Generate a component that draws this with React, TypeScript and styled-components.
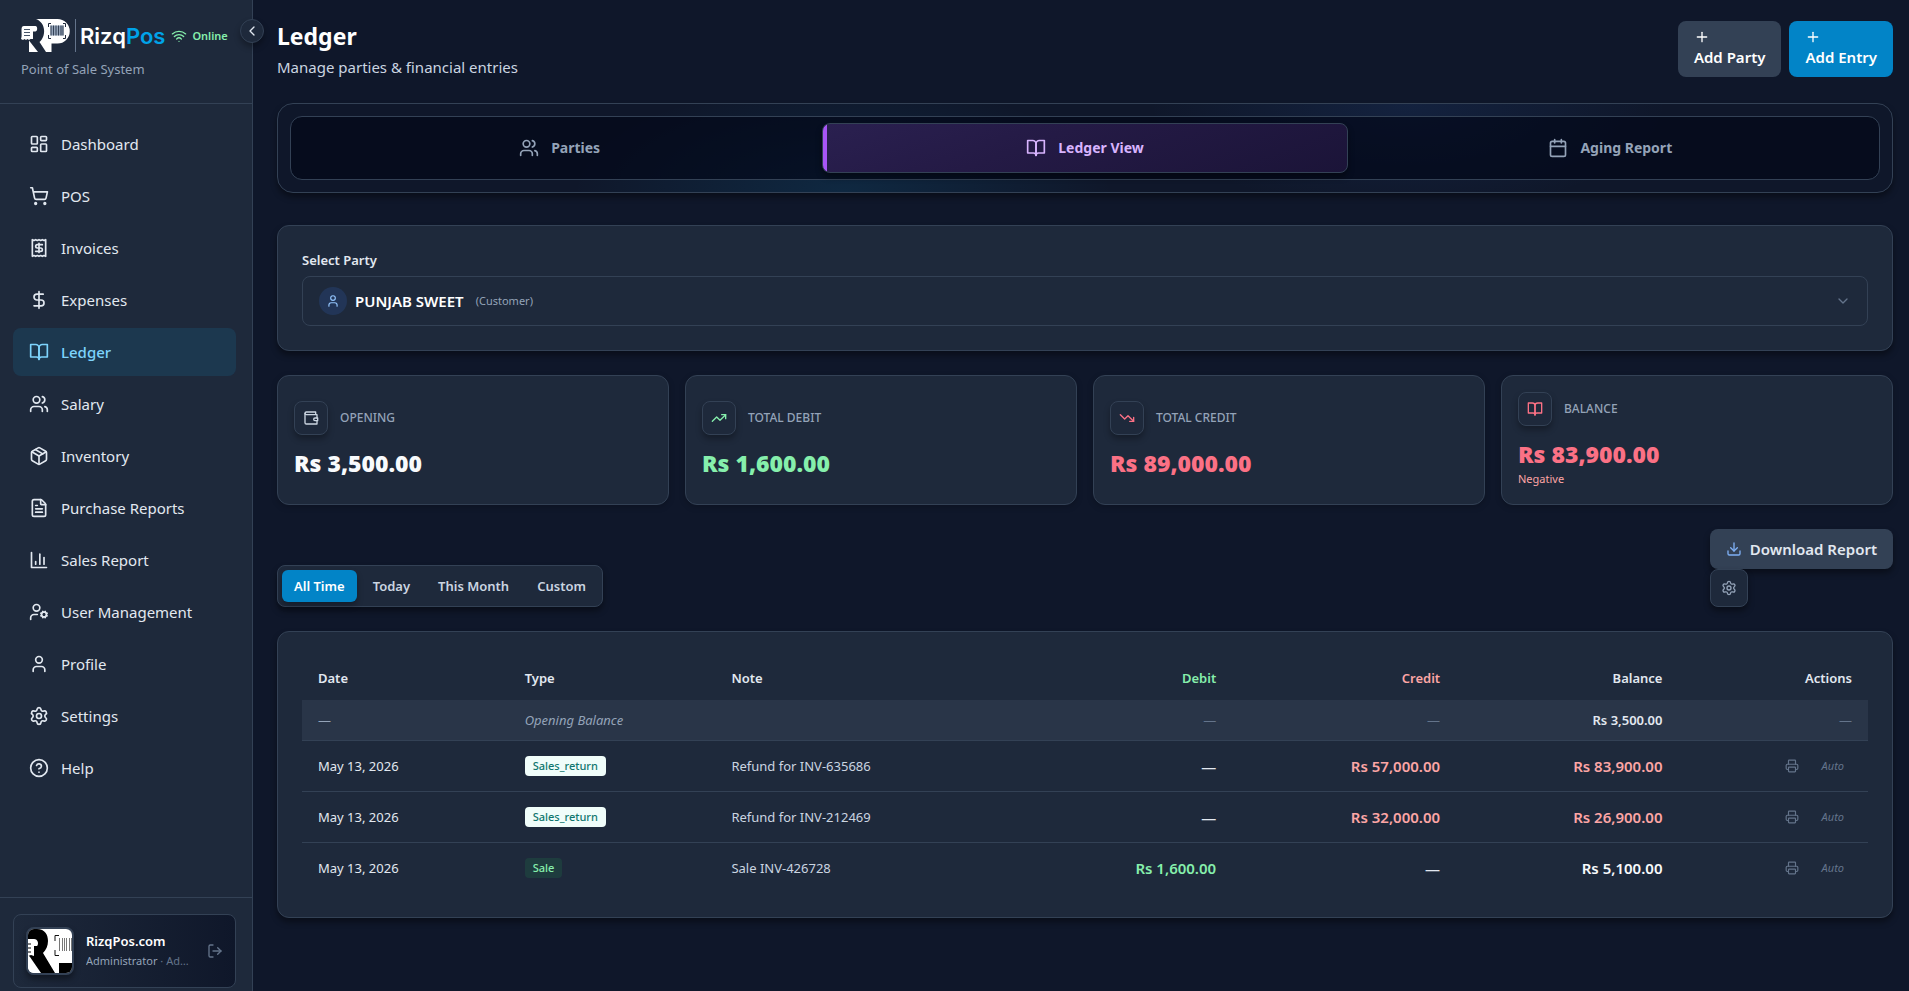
import React from 'react';
import styled, { createGlobalStyle, css } from 'styled-components';
import {
  LayoutDashboard, ShoppingCart, Receipt, DollarSign, Users, Package, FileText, UserCog, User,
  Settings, CircleHelp, Wifi, ChevronLeft, ChevronDown, Plus, Calendar, TrendingUp, TrendingDown,
  Download, Printer, LogOut,
} from 'lucide-react';

const c = {
  page: '#0f172a',
  panel: '#1e293b',
  line: '#334155',
  text: '#e2e8f0',
  soft: '#cbd5e1',
  muted: '#94a3b8',
  faint: '#64748b',
  sky: '#0284c7',
  green: '#86efac',
  red: '#fca5a5',
  rose: '#fb7185',
};

const GlobalStyle = createGlobalStyle`
  *, *::before, *::after { box-sizing: border-box; }
  body {
    margin: 0;
    background: ${c.page};
    color: ${c.text};
    font-family: 'Noto Sans', 'Open Sans', sans-serif;
    font-size: 15px;
    line-height: 24px;
  }
  button, select { font: inherit; color: inherit; cursor: pointer; }
  h1, p { margin: 0; }
`;

/* ---------- icons that the package draws in another form ---------- */

type IconProps = { size?: number; strokeWidth?: number };

const Outline = ({ size = 20, strokeWidth = 2, children }: IconProps & { children: React.ReactNode }) => (
  <svg width={size} height={size} viewBox="0 0 24 24" fill="none" stroke="currentColor"
    strokeWidth={strokeWidth} strokeLinecap="round" strokeLinejoin="round" aria-hidden="true">
    {children}
  </svg>
);

const BookIcon = (p: IconProps) => (
  <Outline {...p}>
    <path d="M2 3h6a4 4 0 0 1 4 4v14a3 3 0 0 0-3-3H2z" />
    <path d="M22 3h-6a4 4 0 0 0-4 4v14a3 3 0 0 1 3-3h7z" />
  </Outline>
);

const BarsIcon = (p: IconProps) => (
  <Outline {...p}>
    <path d="M3 3v18h18" />
    <path d="M18 17V9" />
    <path d="M13 17V5" />
    <path d="M8 17v-3" />
  </Outline>
);

const WalletIcon = (p: IconProps) => (
  <Outline {...p}>
    <path d="M21 12V7H5a2 2 0 0 1 0-4h14v4" />
    <path d="M3 5v14a2 2 0 0 0 2 2h16v-5" />
    <path d="M18 12a2 2 0 0 0 0 4h4v-4Z" />
  </Outline>
);

const LogoMark = () => (
  <svg width="49" height="33" viewBox="0 0 49 33" aria-hidden="true">
    <path fill="#fff" d="M15 0h21.500a12 12 0 0 1 0 24.500H30.500V33H25L18.500 23C25 18 25.500 4 15 0Z" />
    <path fill="#fff" d="M8 21.500 17 33H8Z" />
    <path fill="#fff" d="M3 7h11.500c2 0 2.500 5 0 5.500H12V20H9.500l-1.500 1-1.500-1-1.500 1-1.500-1L2 21 0 20c1-3 .5-5 .5-9C.5 8.500 1 7 3 7Z" />
    <path stroke="#475569" strokeWidth="1" d="M3 10.500h6M3 13.500h6M3 16.500h6" />
    <path fill="none" stroke="#1e293b" strokeWidth="1" d="M30 4.500h-2.500V8M42 4.500h2.500V8M30 19.500h-2.500V16M42 19.500h2.500V16" />
    <rect x="29.500" y="6.500" width="13" height="10" fill="#94a3b8" />
    <path stroke="#334155" strokeWidth="1" d="M30 6.500v10M32.500 6.500v10M35 6.500v10M37.500 6.500v10M40 6.500v10M42 6.500v10" />
  </svg>
);

const AvatarArt = () => (
  <svg width="44" height="44" viewBox="0 0 44 44" aria-hidden="true">
    <rect width="44" height="44" fill="#fff" />
    <path d="M0 0h9c8 0 11 6 11 12 0 5-2 9-5 12l12 20H13L2 28 0 26Z" />
    <path fill="#fff" d="M0 10h6c4 0 5 5 3 7H6v10l-3-1-3 1Z" />
    <path stroke="#000" strokeWidth="1" d="M0 15h3M0 19h3M0 23h3" />
    <path fill="#fff" d="M0 28 12 44H0Z" />
    <path d="M31 34h13v10H31Z" />
    <path fill="none" stroke="#111" strokeWidth="1" d="M31 6.500h-4V12M31 26.500h-4V21" />
    <path stroke="#777" strokeWidth="1" d="M31.500 9v13M34.500 9v13M36.500 9v13M38.500 9v13M41.500 9v13M43.500 9v13" />
  </svg>
);

/* ---------- sidebar ---------- */

const Shell = styled.div`
  display: flex;
  min-height: 100vh;
`;

const Sidebar = styled.aside`
  position: sticky;
  top: 0;
  flex: none;
  width: 253px;
  height: 100vh;
  display: flex;
  flex-direction: column;
  background: ${c.panel};
  border-right: 1px solid ${c.line};
`;

const Brand = styled.div`
  padding: 19px 16px 24px 21px;
  border-bottom: 1px solid ${c.line};
`;

const BrandRow = styled.div`
  display: flex;
  align-items: center;
  height: 33px;
`;

const Wordmark = styled.span`
  display: flex;
  align-items: center;
  height: 33px;
  margin: 0 6px 0 5px;
  padding-left: 4px;
  border-left: 1px solid ${c.faint};
  font: 600 22px/28px Inter, sans-serif;
  color: #fff;
  em { font-style: normal; color: #00a3e8; }
`;

const Online = styled.span`
  display: flex;
  align-items: center;
  gap: 5px;
  font-size: 11px;
  font-weight: 600;
  line-height: 16px;
  color: ${c.green};
`;

const Tagline = styled.p`
  margin-top: 7px;
  font-size: 13px;
  line-height: 20px;
  color: ${c.muted};
`;

const Collapse = styled.button`
  position: absolute;
  top: 19px;
  right: -12px;
  z-index: 1;
  display: grid;
  place-items: center;
  width: 24px;
  height: 24px;
  padding: 0;
  border: 1px solid ${c.line};
  border-radius: 50%;
  background: ${c.panel};
  box-shadow: 0 4px 6px rgba(0, 0, 0, 0.3);
`;

const Nav = styled.nav`
  flex: 1;
  min-height: 0;
  overflow: hidden;
  display: flex;
  flex-direction: column;
  gap: 4px;
  padding: 16px 16px 16px 13px;
`;

const NavLink = styled.a<{ $active?: boolean }>`
  display: flex;
  align-items: center;
  gap: 12px;
  flex: 0 0 48px;
  padding: 0 16px;
  border-radius: 8px;
  color: ${c.text};
  text-decoration: none;
  ${(p) => p.$active && css`
    background: rgba(14, 165, 233, 0.12);
    color: #7dd3fc;
    font-weight: 500;
  `}
`;

const Foot = styled.div`
  padding: 16px 16px 3px 13px;
  border-top: 1px solid ${c.line};
`;

const Profile = styled.div`
  display: flex;
  align-items: center;
  gap: 12px;
  padding: 12px;
  border: 1px solid ${c.line};
  border-radius: 8px;
  background: linear-gradient(90deg, ${c.panel}, ${c.page});
`;

const Avatar = styled.span`
  flex: none;
  display: block;
  width: 48px;
  height: 48px;
  overflow: hidden;
  border: 2px solid ${c.line};
  border-radius: 8px;
  box-shadow: 0 4px 6px rgba(0, 0, 0, 0.4);
  svg { display: block; }
`;

const ProfileText = styled.div`
  flex: 1;
  min-width: 0;
  p { overflow: hidden; white-space: nowrap; text-overflow: ellipsis; }
`;

const ProfileName = styled.p`
  font-size: 13px;
  font-weight: 600;
  line-height: 20px;
  color: #fff;
`;

const ProfileRole = styled.p`
  font-size: 11px;
  line-height: 20px;
  color: ${c.faint};
  span { color: ${c.muted}; }
`;

const BareButton = styled.button`
  display: inline-grid;
  place-items: center;
  padding: 0;
  border: 0;
  background: none;
  color: ${c.faint};
`;

const LogoutButton = styled(BareButton)`
  width: 16px;
  height: 28px;
`;

/* ---------- main area ---------- */

const Main = styled.main`
  flex: 1;
  min-width: 0;
  padding: 21px 16px 24px 24px;
`;

const PageHead = styled.header`
  display: flex;
  justify-content: space-between;
  margin-bottom: 24px;
`;

const Title = styled.h1`
  font-size: 23px;
  line-height: 30px;
  color: #fff;
`;

const Subtitle = styled.p`
  margin-top: 4px;
  color: ${c.soft};
`;

const HeadActions = styled.div`
  display: flex;
  gap: 8px;
`;

const AddButton = styled.button<{ $primary?: boolean }>`
  display: flex;
  flex-direction: column;
  align-items: flex-start;
  height: 56px;
  padding: 8px 16px;
  border: 0;
  border-radius: 8px;
  background: ${(p) => (p.$primary ? c.sky : c.line)};
  color: #fff;
  font-weight: 600;
`;

const TabFrame = styled.section`
  margin-bottom: 32px;
  padding: 12px;
  border: 1px solid ${c.line};
  border-radius: 16px;
  background:
    radial-gradient(ellipse 270px 110px at 35% 100%, rgba(14, 165, 233, 0.12), transparent),
    radial-gradient(ellipse 260px 110px at 70% 0%, rgba(59, 130, 246, 0.1), transparent),
    ${c.page};
  box-shadow: 0 4px 6px rgba(0, 0, 0, 0.4);
`;

const TabList = styled.div`
  display: grid;
  grid-template-columns: repeat(3, 1fr);
  padding: 6px;
  border: 1px solid ${c.line};
  border-radius: 12px;
  background: rgba(2, 6, 23, 0.65);
`;

const Tab = styled.button<{ $active?: boolean }>`
  display: flex;
  align-items: center;
  justify-content: center;
  gap: 12px;
  height: 50px;
  padding: 0;
  border: 1px solid transparent;
  border-radius: 8px;
  background: none;
  color: ${c.muted};
  font-size: 14px;
  font-weight: 700;
  ${(p) => p.$active && css`
    border-color: ${c.line};
    background:
      linear-gradient(90deg, #a855f7 4px, transparent 4px),
      linear-gradient(160deg, #2a2050, #241a45 40%, #1b1438);
    box-shadow: 0 4px 6px rgba(0, 0, 0, 0.4);
    color: #d8b4fe;
  `}
`;

const Card = styled.section`
  margin-bottom: 24px;
  padding: 24px;
  border: 1px solid ${c.line};
  border-radius: 12px;
  background: ${c.panel};
  box-shadow: 0 4px 6px rgba(0, 0, 0, 0.4);
`;

const FieldLabel = styled.label`
  display: block;
  margin-bottom: 6px;
  font-size: 13px;
  font-weight: 600;
  line-height: 20px;
`;

const PartyField = styled.div`
  display: flex;
  align-items: center;
  height: 50px;
  padding: 0 16px;
  border: 1px solid ${c.line};
  border-radius: 8px;
  > svg { margin-left: auto; color: ${c.faint}; }
`;

const PartyBadge = styled.span`
  display: grid;
  place-items: center;
  width: 28px;
  height: 28px;
  margin-right: 8px;
  border-radius: 50%;
  background: rgba(59, 130, 246, 0.15);
  color: #93c5fd;
`;

const PartySelect = styled.select`
  appearance: none;
  field-sizing: content;
  margin-right: 12px;
  padding: 0;
  border: 0;
  background: ${c.panel};
  color: #fff;
  font-weight: 600;
`;

const PartyKind = styled.span`
  font-size: 11px;
  color: ${c.muted};
`;

const Stats = styled.div`
  display: grid;
  grid-template-columns: repeat(4, 1fr);
  gap: 16px;
  margin-bottom: 24px;
`;

const Stat = styled.section`
  display: flex;
  flex-direction: column;
  justify-content: center;
  min-height: 130px;
  padding: 16px;
  border: 1px solid ${c.line};
  border-radius: 12px;
  background: ${c.panel};
  box-shadow: 0 2px 6px rgba(0, 0, 0, 0.2);
`;

const StatHead = styled.div`
  display: flex;
  align-items: center;
  gap: 12px;
  margin-bottom: 12px;
  font-size: 12px;
  font-weight: 500;
  text-transform: uppercase;
  color: ${c.muted};
`;

const StatIcon = styled.span<{ $color: string }>`
  display: grid;
  place-items: center;
  width: 34px;
  height: 34px;
  border: 1px solid ${c.line};
  border-radius: 8px;
  color: ${(p) => p.$color};
  background: ${c.panel};
  box-shadow: 0 4px 6px rgba(0, 0, 0, 0.3);
`;

const StatValue = styled.p<{ $color: string }>`
  font-size: 23px;
  font-weight: 900;
  line-height: 32px;
  color: ${(p) => p.$color};
`;

const StatNote = styled.p`
  font-size: 11px;
  line-height: 18px;
  color: ${c.red};
`;

const Toolbar = styled.div`
  display: flex;
  align-items: flex-end;
  justify-content: space-between;
  margin-bottom: 24px;
`;

const Filters = styled.div`
  display: flex;
  gap: 4px;
  padding: 4px;
  border: 1px solid ${c.line};
  border-radius: 8px;
  background: ${c.panel};
  box-shadow: 0 4px 6px rgba(0, 0, 0, 0.4);
`;

const Filter = styled.button<{ $active?: boolean }>`
  height: 32px;
  padding: 0 12px;
  border: 0;
  border-radius: 6px;
  background: none;
  color: ${c.soft};
  font-size: 13px;
  font-weight: 600;
  ${(p) => p.$active && css`
    background: ${c.sky};
    box-shadow: 0 4px 6px rgba(0, 0, 0, 0.3);
    color: #fff;
  `}
`;

const ReportTools = styled.div`
  display: flex;
  flex-direction: column;
  align-items: flex-start;
`;

const DownloadButton = styled.button`
  display: flex;
  align-items: center;
  gap: 8px;
  height: 40px;
  padding: 0 16px;
  border: 0;
  border-radius: 8px;
  background: ${c.line};
  box-shadow: 0 4px 6px rgba(0, 0, 0, 0.4);
  font-weight: 600;
  svg { color: #7fb0f5; }
`;

const GearButton = styled.button`
  display: grid;
  place-items: center;
  width: 38px;
  height: 38px;
  padding: 0;
  border: 1px solid ${c.line};
  border-radius: 8px;
  background: ${c.panel};
  box-shadow: 0 4px 6px rgba(0, 0, 0, 0.4);
  color: ${c.muted};
`;

/* ---------- ledger table ---------- */

const Table = styled.table`
  width: 100%;
  table-layout: fixed;
  border-collapse: collapse;
  font-size: 13px;
  line-height: 20px;
`;

const Col = styled.col<{ $share: string }>`
  width: ${(p) => p.$share};
`;

const Th = styled.th<{ $right?: boolean; $color?: string }>`
  height: 44px;
  padding: 0 16px;
  text-align: ${(p) => (p.$right ? 'right' : 'left')};
  font-weight: 600;
  color: ${(p) => p.$color ?? c.text};
`;

const Row = styled.tr<{ $opening?: boolean }>`
  height: 51px;
  border-bottom: 1px solid ${c.line};
  &:last-child { border-bottom: 0; }
  ${(p) => p.$opening && css`
    height: 40px;
    background: rgba(51, 65, 85, 0.5);
    color: ${c.muted};
  `}
`;

const Td = styled.td<{ $color?: string }>`
  padding: 0 16px;
  color: ${(p) => p.$color ?? 'inherit'};
`;

const TdNum = styled(Td)<{ $strong?: boolean }>`
  text-align: right;
  ${(p) => p.$strong && css`
    font-size: 15px;
    font-weight: 600;
  `}
`;

const OpeningBalance = styled.span`
  font-weight: 600;
`;

const Tag = styled.span<{ $sale?: boolean }>`
  display: inline-block;
  padding: 0 8px;
  border-radius: 4px;
  background: ${(p) => (p.$sale ? 'rgba(34, 197, 94, 0.12)' : '#f0fdfa')};
  color: ${(p) => (p.$sale ? c.green : '#0f766e')};
  font-size: 11px;
  font-weight: 500;
`;

const RowActions = styled.div`
  display: flex;
  align-items: center;
  justify-content: flex-end;
  gap: 16px;
  padding-right: 8px;
  font-size: 11px;
  font-style: italic;
  color: ${c.faint};
`;

const PrintButton = styled(BareButton)`
  width: 28px;
  height: 28px;
`;

/* ---------- data ---------- */

const nav = [
  { label: 'Dashboard', Icon: LayoutDashboard },
  { label: 'POS', Icon: ShoppingCart },
  { label: 'Invoices', Icon: Receipt },
  { label: 'Expenses', Icon: DollarSign },
  { label: 'Ledger', Icon: BookIcon, active: true },
  { label: 'Salary', Icon: Users },
  { label: 'Inventory', Icon: Package },
  { label: 'Purchase Reports', Icon: FileText },
  { label: 'Sales Report', Icon: BarsIcon },
  { label: 'User Management', Icon: UserCog },
  { label: 'Profile', Icon: User },
  { label: 'Settings', Icon: Settings },
  { label: 'Help', Icon: CircleHelp },
];

const tabs = [
  { label: 'Parties', Icon: Users },
  { label: 'Ledger View', Icon: BookIcon, active: true },
  { label: 'Aging Report', Icon: Calendar },
];

const stats = [
  { label: 'Opening', value: 'Rs 3,500.00', color: '#f8fafc', iconColor: c.soft, Icon: WalletIcon },
  { label: 'Total Debit', value: 'Rs 1,600.00', color: c.green, iconColor: c.green, Icon: TrendingUp },
  { label: 'Total Credit', value: 'Rs 89,000.00', color: c.rose, iconColor: c.rose, Icon: TrendingDown },
  { label: 'Balance', value: 'Rs 83,900.00', color: c.rose, iconColor: c.rose, Icon: BookIcon, note: 'Negative' },
];

const filters = ['All Time', 'Today', 'This Month', 'Custom'];

const shares = ['13.2%', '13.2%', '18.8%', '14.2%', '14.3%', '14.2%', '12.1%'];

type Entry = { id: number; date: string; type: string; note: string; debit?: string; credit?: string; balance: string; tone: string };

const entries: Entry[] = [
  { id: 1, date: 'May 13, 2026', type: 'Sales_return', note: 'Refund for INV-635686', credit: 'Rs 57,000.00', balance: 'Rs 83,900.00', tone: c.red },
  { id: 2, date: 'May 13, 2026', type: 'Sales_return', note: 'Refund for INV-212469', credit: 'Rs 32,000.00', balance: 'Rs 26,900.00', tone: c.red },
  { id: 3, date: 'May 13, 2026', type: 'Sale', note: 'Sale INV-426728', debit: 'Rs 1,600.00', balance: 'Rs 5,100.00', tone: '#f8fafc' },
];

export default function App() {
  return (
    <Shell>
      <GlobalStyle />
      <Sidebar>
        <Brand>
          <BrandRow>
            <LogoMark />
            <Wordmark>Rizq<em>Pos</em></Wordmark>
            <Online><Wifi size={16} />Online</Online>
          </BrandRow>
          <Tagline>Point of Sale System</Tagline>
        </Brand>
        <Collapse aria-label="Collapse sidebar"><ChevronLeft size={16} /></Collapse>
        <Nav>
          {nav.map(({ label, Icon, active }) => (
            <NavLink key={label} href={`#${label}`} $active={active}>
              <Icon size={20} />
              {label}
            </NavLink>
          ))}
        </Nav>
        <Foot>
          <Profile>
            <Avatar><AvatarArt /></Avatar>
            <ProfileText>
              <ProfileName>RizqPos.com</ProfileName>
              <ProfileRole><span>Administrator</span> · Administrator</ProfileRole>
            </ProfileText>
            <LogoutButton aria-label="Log out"><LogOut size={16} /></LogoutButton>
          </Profile>
        </Foot>
      </Sidebar>

      <Main>
        <PageHead>
          <div>
            <Title>Ledger</Title>
            <Subtitle>Manage parties &amp; financial entries</Subtitle>
          </div>
          <HeadActions>
            <AddButton><Plus size={16} />Add Party</AddButton>
            <AddButton $primary><Plus size={16} />Add Entry</AddButton>
          </HeadActions>
        </PageHead>

        <TabFrame>
          <TabList role="tablist">
            {tabs.map(({ label, Icon, active }) => (
              <Tab key={label} role="tab" aria-selected={!!active} $active={active}>
                <Icon size={20} />
                {label}
              </Tab>
            ))}
          </TabList>
        </TabFrame>

        <Card>
          <FieldLabel htmlFor="party">Select Party</FieldLabel>
          <PartyField>
            <PartyBadge><User size={14} /></PartyBadge>
            <PartySelect id="party">
              <option>PUNJAB SWEET</option>
            </PartySelect>
            <PartyKind>(Customer)</PartyKind>
            <ChevronDown size={16} />
          </PartyField>
        </Card>

        <Stats>
          {stats.map(({ label, value, color, iconColor, Icon, note }) => (
            <Stat key={label}>
              <StatHead>
                <StatIcon $color={iconColor}><Icon size={16} /></StatIcon>
                {label}
              </StatHead>
              <StatValue $color={color}>{value}</StatValue>
              {note && <StatNote>{note}</StatNote>}
            </Stat>
          ))}
        </Stats>

        <Toolbar>
          <Filters>
            {filters.map((label, i) => (
              <Filter key={label} $active={i === 0}>{label}</Filter>
            ))}
          </Filters>
          <ReportTools>
            <DownloadButton><Download size={16} />Download Report</DownloadButton>
            <GearButton aria-label="Report settings"><Settings size={16} /></GearButton>
          </ReportTools>
        </Toolbar>

        <Card>
          <Table>
            <colgroup>
              {shares.map((share, i) => <Col key={i} $share={share} />)}
            </colgroup>
            <thead>
              <tr>
                <Th>Date</Th>
                <Th>Type</Th>
                <Th>Note</Th>
                <Th $right $color={c.green}>Debit</Th>
                <Th $right $color={c.red}>Credit</Th>
                <Th $right>Balance</Th>
                <Th $right>Actions</Th>
              </tr>
            </thead>
            <tbody>
              <Row $opening>
                <Td>—</Td>
                <Td><i>Opening Balance</i></Td>
                <Td />
                <TdNum $color={c.faint}>—</TdNum>
                <TdNum $color={c.faint}>—</TdNum>
                <TdNum $color={c.text}><OpeningBalance>Rs 3,500.00</OpeningBalance></TdNum>
                <TdNum $color={c.faint}>—</TdNum>
              </Row>
              {entries.map((e) => (
                <Row key={e.id}>
                  <Td>{e.date}</Td>
                  <Td><Tag $sale={e.type === 'Sale'}>{e.type}</Tag></Td>
                  <Td $color={c.soft}>{e.note}</Td>
                  <TdNum $strong $color={e.debit && c.green}>{e.debit ?? '—'}</TdNum>
                  <TdNum $strong $color={e.credit && c.red}>{e.credit ?? '—'}</TdNum>
                  <TdNum $strong $color={e.tone}>{e.balance}</TdNum>
                  <Td>
                    <RowActions>
                      <PrintButton aria-label="Print entry"><Printer size={14} /></PrintButton>
                      Auto
                    </RowActions>
                  </Td>
                </Row>
              ))}
            </tbody>
          </Table>
        </Card>
      </Main>
    </Shell>
  );
}
